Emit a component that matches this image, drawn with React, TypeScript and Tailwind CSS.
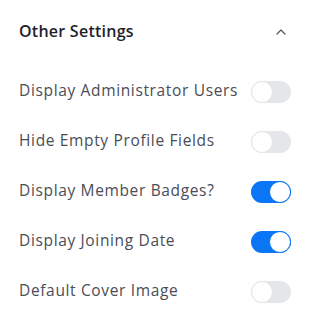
import { useState } from "react";

const initial = [
  { label: "Display Administrator Users", on: false },
  { label: "Hide Empty Profile Fields", on: false },
  { label: "Display Member Badges?", on: true },
  { label: "Display Joining Date", on: true },
  { label: "Default Cover Image", on: false },
];

function Toggle({ on, onClick }: { on: boolean; onClick: () => void }) {
  return (
    <button
      onClick={onClick}
      className={`w-[40px] h-[22px] rounded-full flex items-center shrink-0 transition-colors ${on ? "bg-[#0a75f5] justify-end" : "bg-[#e4e6ea] justify-start"}`}
    >
      <span
        className={`w-[22px] h-[22px] rounded-full bg-white border ${on ? "border-[#0a75f5]" : "border-[#e4e6ea]"}`}
      />
    </button>
  );
}

export default function App() {
  const [items, setItems] = useState(initial);

  return (
    <div className="w-[314px] h-[327px] bg-white px-[19px] pt-[19px] font-['Open_Sans',sans-serif]">
      <div className="flex justify-between items-center h-[24px] mb-[38px]">
        <h2 className="text-[16px] font-semibold tracking-[0.25px] text-[#1e1f2b]">Other Settings</h2>
        <svg width="10" height="6" viewBox="0 0 10 6" className="mr-[9px] mt-[1px]" fill="none">
          <path d="M1 5L5 1L9 5" stroke="#555" strokeWidth="1.2" strokeLinecap="round" strokeLinejoin="round" />
        </svg>
      </div>
      <div className="flex flex-col gap-[28px]">
        {items.map((item, i) => (
          <div key={item.label} className="flex justify-between items-center h-[22px] pr-[4px]">
            <span className="text-[15.5px] tracking-[0.65px] text-[#4a4d57] -mt-[3px]">{item.label}</span>
            <Toggle
              on={item.on}
              onClick={() => setItems(items.map((it, j) => (j === i ? { ...it, on: !it.on } : it)))}
            />
          </div>
        ))}
      </div>
    </div>
  );
}
